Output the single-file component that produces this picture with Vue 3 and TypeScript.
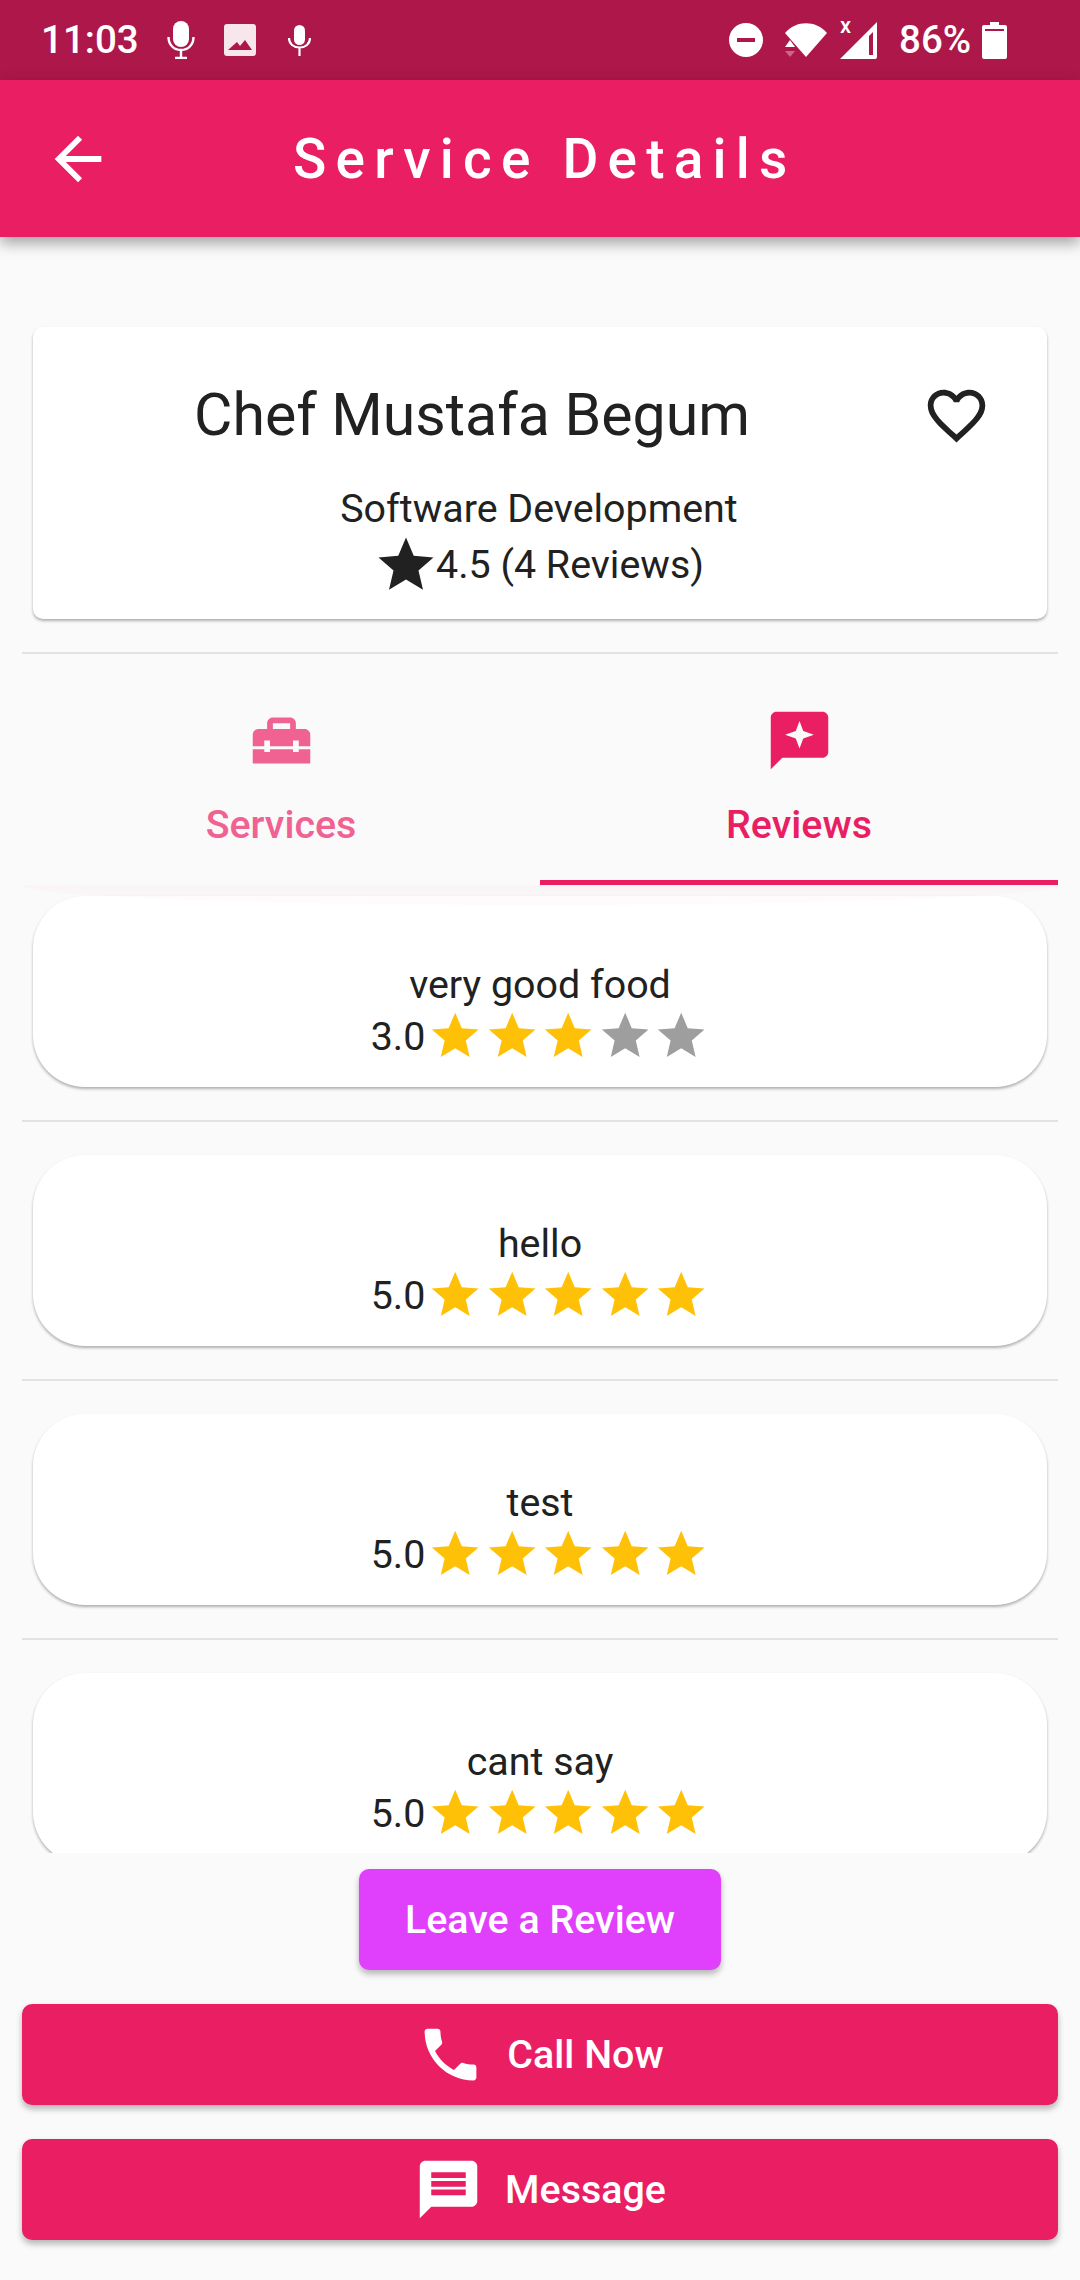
<script setup lang="ts">
interface Review {
  text: string;
  rating: number;
}

const reviews: Review[] = [
  { text: "very good food", rating: 3 },
  { text: "hello", rating: 5 },
  { text: "test", rating: 5 },
  { text: "cant say", rating: 5 },
];

const starPath =
  "M12 17.27L18.18 21l-1.64-7.03L22 9.24l-7.19-.61L12 2 9.19 8.63 2 9.24l5.46 4.73L5.82 21z";
</script>

<template>
  <div class="page">
    <div class="status-bar">
      <span class="status-text time">11:03</span>
      <svg class="st-mic" viewBox="0 0 28 38">
        <rect x="6" y="0" width="16" height="26" rx="8" fill="#fff" />
        <path d="M1.5 16c0 8 5.5 13 12.5 13s12.5-5 12.5-13" fill="none" stroke="#fff" stroke-width="2.4" />
        <path d="M14 29v7M8 37h12" stroke="#fff" stroke-width="2.4" />
      </svg>
      <svg class="st-image" viewBox="0 0 32 32">
        <path d="M3 0h26a3 3 0 0 1 3 3v26a3 3 0 0 1-3 3H3a3 3 0 0 1-3-3V3a3 3 0 0 1 3-3zM4 26h24l-7-10-5 6-3-4z" fill="#f7e6ec" fill-rule="evenodd" />
      </svg>
      <svg class="st-mic-small" viewBox="0 0 23 31">
        <rect x="6" y="0" width="11" height="20" rx="5.5" fill="#fff" />
        <path d="M1 13c0 6 4.500 9.500 10.500 9.500S22 19 22 13M11.500 22v9" fill="none" stroke="#fff" stroke-width="2.200" />
      </svg>
      <div class="status-spacer"></div>
      <svg class="st-dnd" viewBox="0 0 34 34">
        <path d="M17 0a17 17 0 1 1 0 34a17 17 0 0 1 0-34zM8 15v4h18v-4z" fill="#fff" fill-rule="evenodd" />
      </svg>
      <svg class="st-wifi" viewBox="0 0 42 36">
        <path d="M0 11C11 -2 31 -2 42 11L21 35z" fill="#fff" />
        <path d="M0 25l5-7 5 7z" fill="#fff" />
        <path d="M0 29h10l-5 6z" fill="#fff" fill-opacity=".35" />
      </svg>
      <div class="st-signal">
        <span class="st-x">x</span>
        <svg viewBox="0 0 37 37">
          <path d="M37 0v35a2 2 0 0 1-2 2H0zM33 10L29 14v19h4z" fill="#fff" fill-rule="evenodd" />
        </svg>
      </div>
      <span class="status-text pct">86%</span>
      <svg class="st-battery" viewBox="0 0 25 37">
        <path d="M8 0h9v3h6a2 2 0 0 1 2 2v30a2 2 0 0 1-2 2H2a2 2 0 0 1-2-2V5a2 2 0 0 1 2-2h6zM3 7v2h19V7z" fill="#fff" fill-rule="evenodd" />
      </svg>
    </div>

    <header class="app-bar">
      <svg class="back" viewBox="0 0 24 24">
        <path d="M20 11H7.830l5.590-5.590L12 4l-8 8 8 8 1.410-1.410L7.830 13H20v-2z" fill="#fff" />
      </svg>
      <h1 class="title">Service Details</h1>
    </header>

    <section class="info-card">
      <div class="name-row">
        <span class="name">Chef Mustafa Begum</span>
        <svg class="heart" viewBox="0 0 24 24">
          <path d="M16.500 3c-1.740 0-3.410.81-4.500 2.090C10.910 3.810 9.240 3 7.500 3 4.420 3 2 5.420 2 8.500c0 3.780 3.400 6.860 8.550 11.540L12 21.350l1.450-1.320C18.600 15.360 22 12.280 22 8.500 22 5.420 19.580 3 16.500 3zm-4.400 15.550l-.1.100-.1-.1C7.140 14.240 4 11.390 4 8.500 4 6.500 5.500 5 7.500 5c1.540 0 3.040.99 3.570 2.360h1.870C13.460 5.990 14.960 5 16.500 5c2 0 3.500 1.500 3.500 3.500 0 2.890-3.140 5.740-7.900 10.050z" fill="#212121" />
        </svg>
      </div>
      <div class="category">Software Development</div>
      <div class="rating-row">
        <svg class="rating-star" viewBox="0 0 24 24"><path :d="starPath" fill="#212121" /></svg>
        <span>4.5 (4 Reviews)</span>
      </div>
    </section>

    <div class="divider top-divider"></div>

    <nav class="tabs">
      <div class="tab inactive">
        <svg class="tab-icon" viewBox="0 0 24 24">
          <path d="M18 16h-2v-1H8v1H6v-1H2v5h20v-5h-4zm2-8h-3V6c0-1.100-.9-2-2-2H9c-1.100 0-2 .9-2 2v2H4c-1.100 0-2 .9-2 2v4h4v-2h2v2h8v-2h2v2h4v-4c0-1.100-.9-2-2-2zm-5 0H9V6h6v2z" fill="currentColor" />
        </svg>
        <span class="tab-label">Services</span>
      </div>
      <div class="tab active">
        <svg class="tab-icon" viewBox="0 0 24 24">
          <path d="M20 2H4.010c-1.100 0-2 .9-2 2L2 22l4-4h14c1.100 0 2-.9 2-2V4c0-1.100-.9-2-2-2zM12 5.200l1.300 3.500 3.700 1.300-3.700 1.300-1.300 3.500-1.300-3.500L7 10l3.700-1.300z" fill="currentColor" fill-rule="evenodd" />
        </svg>
        <span class="tab-label">Reviews</span>
      </div>
    </nav>

    <div class="review-list">
      <div class="glow"></div>
      <div v-for="(review, i) in reviews" :key="i" class="review-item">
        <div class="review-card">
          <div class="review-text">{{ review.text }}</div>
          <div class="review-rating">
            <span class="review-score">{{ review.rating.toFixed(1) }}</span>
            <svg v-for="n in 5" :key="n" class="star" viewBox="0 0 24 24">
              <path :d="starPath" :fill="n <= review.rating ? '#ffc107' : '#9e9e9e'" />
            </svg>
          </div>
        </div>
        <div class="divider"></div>
      </div>
    </div>

    <div class="actions">
      <button class="btn btn-review">Leave a Review</button>
      <button class="btn btn-wide">
        <svg class="btn-icon" viewBox="0 0 24 24">
          <path d="M6.620 10.790c1.440 2.830 3.760 5.140 6.590 6.590l2.200-2.200c.27-.27.67-.36 1.020-.24 1.120.37 2.330.57 3.570.57.55 0 1 .45 1 1V20c0 .55-.45 1-1 1-9.390 0-17-7.610-17-17 0-.55.45-1 1-1h3.500c.55 0 1 .45 1 1 0 1.250.2 2.450.57 3.570.11.35.03.74-.25 1.020l-2.200 2.200z" fill="#fff" />
        </svg>
        <span>Call Now</span>
      </button>
      <button class="btn btn-wide">
        <svg class="btn-icon" viewBox="0 0 24 24">
          <path d="M20 2H4c-1.100 0-1.990.9-1.990 2L2 22l4-4h14c1.100 0 2-.9 2-2V4c0-1.100-.9-2-2-2zm-2 12H6v-2h12v2zm0-3H6V9h12v2zm0-3H6V6h12v2z" fill="#fff" />
        </svg>
        <span>Message</span>
      </button>
    </div>
  </div>
</template>

<style>
html,
body {
  margin: 0;
  background: #fafafa;
}
</style>

<style scoped>
.page {
  width: 1080px;
  height: 2280px;
  display: flex;
  flex-direction: column;
  background: #fafafa;
  color: #212121;
  font-family: Roboto, "Liberation Sans", sans-serif;
  overflow: hidden;
}

.status-bar {
  height: 80px;
  flex: none;
  background: #ad1749;
  display: flex;
  align-items: center;
  padding: 0 73px 0 41px;
  box-sizing: border-box;
  color: #fff;
}

.status-text {
  font-size: 38.5px;
  line-height: 80px;
  font-weight: 500;
}

.time {
  width: 98px;
}

.st-mic {
  width: 28px;
  height: 38px;
  margin-left: 28px;
}

.st-image {
  width: 32px;
  height: 32px;
  margin-left: 29px;
}

.st-mic-small {
  width: 23px;
  height: 31px;
  margin-left: 32px;
}

.status-spacer {
  flex: 1;
}

.st-dnd {
  width: 34px;
  height: 34px;
}

.st-wifi {
  width: 42px;
  height: 36px;
  margin-left: 22px;
}

.st-signal {
  position: relative;
  width: 37px;
  height: 37px;
  margin-left: 13px;
}

.st-signal svg {
  width: 37px;
  height: 37px;
  display: block;
}

.st-x {
  position: absolute;
  left: 0;
  top: -9px;
  font-size: 22px;
  line-height: 26px;
  font-weight: 500;
}

.pct {
  margin-left: 22px;
  width: 70px;
}

.st-battery {
  width: 25px;
  height: 37px;
  margin-left: 13px;
}

.app-bar {
  height: 157px;
  flex: none;
  background: #e91e63;
  display: flex;
  align-items: center;
  padding-left: 43px;
  box-shadow: 0 6px 14px rgba(0, 0, 0, 0.36);
  position: relative;
  z-index: 2;
}

.back {
  width: 70px;
  height: 70px;
  flex: none;
}

.title {
  margin: 0 0 0 180px;
  font-size: 55px;
  font-weight: 500;
  letter-spacing: 9.2px;
  color: #fff;
  white-space: nowrap;
}

.info-card {
  flex: none;
  height: 292px;
  margin: 90px 33px 0;
  background: #fff;
  border-radius: 10px;
  box-shadow: 0 2px 3px rgba(0, 0, 0, 0.3);
  display: flex;
  flex-direction: column;
  align-items: center;
  box-sizing: border-box;
  padding-top: 51px;
}

.name-row {
  width: 100%;
  height: 74px;
  display: flex;
  align-items: center;
  box-sizing: border-box;
  padding-left: 161px;
}

.name {
  font-size: 59px;
  line-height: 74px;
  width: 728px;
  flex: none;
  white-space: nowrap;
}

.heart {
  width: 69px;
  height: 69px;
  flex: none;
}

.category {
  margin-top: 34px;
  font-size: 39.4px;
  line-height: 46px;
  margin-left: -2px;
}

.rating-row {
  display: flex;
  align-items: center;
  font-size: 39.4px;
  line-height: 46px;
  margin-top: 2px;
  height: 62px;
}

.rating-star {
  width: 66px;
  height: 66px;
  margin-right: -3px;
  margin-left: -3px;
  flex: none;
}

.divider {
  height: 2px;
  background: #e2e2e2;
}

.top-divider {
  flex: none;
  margin: 33px 22px 0;
}

.tabs {
  flex: none;
  height: 231px;
  margin: 0 22px;
  display: flex;
}

.tab {
  flex: 1;
  display: flex;
  flex-direction: column;
  align-items: center;
  box-sizing: border-box;
  padding-top: 52px;
}

.tab.inactive {
  color: #f06292;
}

.tab.active {
  color: #e91e63;
  border-bottom: 5px solid #e91e63;
}

.tab-icon {
  width: 69px;
  height: 69px;
}

.tab-label {
  margin-top: 27px;
  font-size: 39.4px;
  line-height: 46px;
  font-weight: 500;
}

.review-list {
  position: relative;
  flex: none;
  height: 968px;
  overflow: hidden;
  padding: 11px 22px 0;
  box-sizing: border-box;
}

.glow {
  position: absolute;
  left: 22px;
  right: 22px;
  top: 0;
  height: 20px;
  background: rgba(233, 30, 99, 0.02);
  border-radius: 0 0 50% 50% / 0 0 100% 100%;
}

.review-item {
  height: 259px;
}

.review-card {
  margin: 0 11px;
  height: 191px;
  background: #fff;
  border-radius: 52px;
  box-shadow: 0 2px 3px rgba(0, 0, 0, 0.3);
  box-sizing: border-box;
  padding-top: 67px;
  display: flex;
  flex-direction: column;
  align-items: center;
}

.review-item .divider {
  margin-top: 33px;
}

.review-text {
  font-size: 39.4px;
  line-height: 43px;
}

.review-rating {
  margin-top: 2px;
  display: flex;
  align-items: center;
  height: 56px;
}

.review-score {
  font-size: 39.4px;
  line-height: 43px;
  margin-right: 2px;
}

.star {
  width: 56.400px;
  height: 56px;
  flex: none;
}

.actions {
  flex: none;
  display: flex;
  flex-direction: column;
  align-items: center;
  padding: 16px 22px 0;
  gap: 34px;
}

.btn {
  border: none;
  border-radius: 10px;
  height: 101px;
  color: #fff;
  font-family: inherit;
  font-size: 39.4px;
  font-weight: 500;
  box-shadow: 0 4px 6px rgba(0, 0, 0, 0.28);
  display: flex;
  align-items: center;
  justify-content: center;
  padding: 0;
}

.btn-review {
  width: 362px;
  background: #e040fb;
}

.btn-wide {
  width: 100%;
  background: #e91e63;
  gap: 22px;
}

.btn-icon {
  width: 69px;
  height: 69px;
  flex: none;
}
</style>
